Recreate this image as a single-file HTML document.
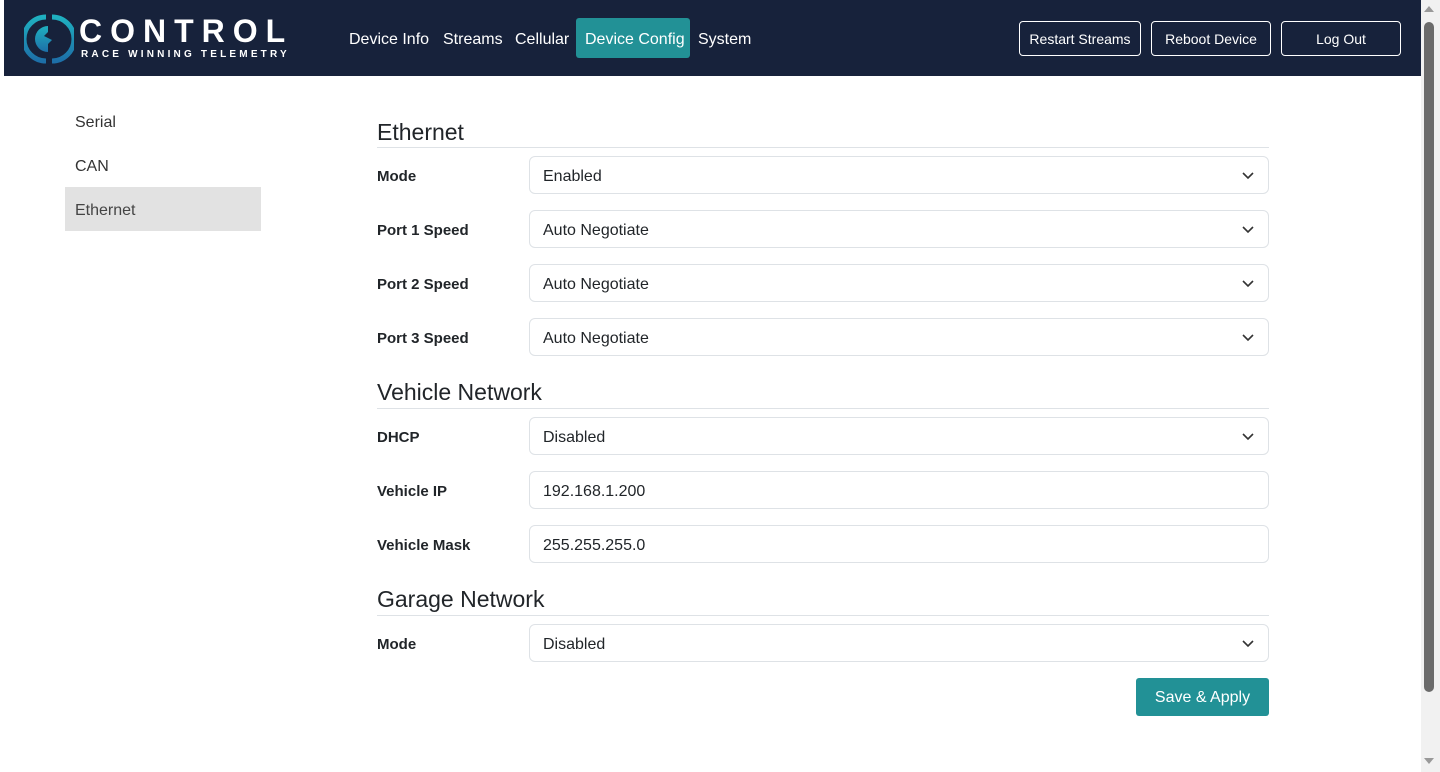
<!DOCTYPE html>
<html><head><style>
*{box-sizing:border-box;margin:0;padding:0}
body{width:1440px;height:772px;overflow:hidden;background:#fff;font-family:"Liberation Sans",sans-serif;color:#212529;position:relative}
.a{position:absolute}
.hdr{left:4px;top:0;width:1417px;height:76px;background:#17223b}
.nav{color:#fff;font-size:16px;top:31px}
.hb{border:1px solid #fff;border-radius:4px;color:#fff;font-size:14px;text-align:center;line-height:35px;top:21px;height:35px}
.side{left:75px;font-size:16px;color:#333}
.h{left:377px;width:892px;font-size:23px;color:#212529;border-bottom:1px solid #dee2e6;padding-top:2px}
.lbl{left:377px;font-size:15px;font-weight:bold}
.sel{left:529px;width:740px;height:38px;border:1px solid #dee2e6;border-radius:6px;font-size:16px;padding-left:13px;line-height:39px}
.sel svg{position:absolute;right:14px;top:13px}
</style></head><body>
<div class="a hdr"></div>
<svg class="a" style="left:24px;top:14px" width="50" height="50" viewBox="0 0 50 50">
<defs><linearGradient id="g" x1="0" y1="0" x2="0" y2="1"><stop offset="0" stop-color="#1fb0c0"/><stop offset="1" stop-color="#1d6fa8"/></linearGradient></defs>
<path d="M22 3 A22 22 0 0 0 22 47" fill="none" stroke="url(#g)" stroke-width="5"/>
<path d="M28 3 A22 22 0 0 1 28 47" fill="none" stroke="url(#g)" stroke-width="5"/>
<path d="M24 12 A13 13 0 0 0 24 38 L24 30 L28 26 L20 22 L24 18 Z" fill="url(#g)"/>
</svg>
<div class="a" style="left:79px;top:13px;color:#fff;font-size:32px;letter-spacing:8px;font-weight:bold">CONTROL</div>
<div class="a" style="left:81px;top:49px;color:#fff;font-size:10px;letter-spacing:3.2px;font-weight:bold">RACE WINNING TELEMETRY</div>
<div class="a nav" style="left:349px">Device Info</div>
<div class="a nav" style="left:443px">Streams</div>
<div class="a nav" style="left:515px">Cellular</div>
<div class="a" style="left:576px;top:18px;width:114px;height:40px;background:#229196;border-radius:3px"></div>
<div class="a nav" style="left:585px">Device Config</div>
<div class="a nav" style="left:698px">System</div>
<div class="a hb" style="left:1019px;width:122px">Restart Streams</div>
<div class="a hb" style="left:1151px;width:120px">Reboot Device</div>
<div class="a hb" style="left:1281px;width:120px">Log Out</div>
<div class="a" style="left:1421px;top:0;width:19px;height:772px;background:#f1f1f1"></div>
<div class="a" style="left:1424px;top:22px;width:10px;height:670px;background:#6b6b6b;border-radius:5px"></div>
<div class="a" style="left:1424px;top:6px;width:0;height:0;border-left:5px solid transparent;border-right:5px solid transparent;border-bottom:6px solid #999"></div>
<div class="a" style="left:1424px;top:758px;width:0;height:0;border-left:5px solid transparent;border-right:5px solid transparent;border-top:6px solid #999"></div>

<div class="a side" style="top:114px">Serial</div>
<div class="a side" style="top:158px">CAN</div>
<div class="a" style="left:65px;top:187px;width:196px;height:44px;background:#e2e2e2"></div>
<div class="a side" style="top:202px;color:#444">Ethernet</div>

<div class="a h" style="top:117px;height:31px">Ethernet</div>
<div class="a lbl" style="top:168px">Mode</div>
<div class="a sel" style="top:156px">Enabled<svg width="12" height="10" viewBox="0 0 12 10"><path d="M1 3l5 5 5-5" fill="none" stroke="#333" stroke-width="1.6"/></svg></div>
<div class="a lbl" style="top:222px">Port 1 Speed</div>
<div class="a sel" style="top:210px">Auto Negotiate<svg width="12" height="10" viewBox="0 0 12 10"><path d="M1 3l5 5 5-5" fill="none" stroke="#333" stroke-width="1.6"/></svg></div>
<div class="a lbl" style="top:276px">Port 2 Speed</div>
<div class="a sel" style="top:264px">Auto Negotiate<svg width="12" height="10" viewBox="0 0 12 10"><path d="M1 3l5 5 5-5" fill="none" stroke="#333" stroke-width="1.6"/></svg></div>
<div class="a lbl" style="top:330px">Port 3 Speed</div>
<div class="a sel" style="top:318px">Auto Negotiate<svg width="12" height="10" viewBox="0 0 12 10"><path d="M1 3l5 5 5-5" fill="none" stroke="#333" stroke-width="1.6"/></svg></div>

<div class="a h" style="top:377px;height:32px">Vehicle Network</div>
<div class="a lbl" style="top:429px">DHCP</div>
<div class="a sel" style="top:417px">Disabled<svg width="12" height="10" viewBox="0 0 12 10"><path d="M1 3l5 5 5-5" fill="none" stroke="#333" stroke-width="1.6"/></svg></div>
<div class="a lbl" style="top:483px">Vehicle IP</div>
<div class="a sel" style="top:471px">192.168.1.200</div>
<div class="a lbl" style="top:537px">Vehicle Mask</div>
<div class="a sel" style="top:525px">255.255.255.0</div>

<div class="a h" style="top:584px;height:32px">Garage Network</div>
<div class="a lbl" style="top:636px">Mode</div>
<div class="a sel" style="top:624px">Disabled<svg width="12" height="10" viewBox="0 0 12 10"><path d="M1 3l5 5 5-5" fill="none" stroke="#333" stroke-width="1.6"/></svg></div>

<div class="a" style="left:1136px;top:678px;width:133px;height:38px;background:#229196;border-radius:3px;color:#fff;font-size:16px;text-align:center;line-height:40px">Save &amp; Apply</div>
</body></html>
